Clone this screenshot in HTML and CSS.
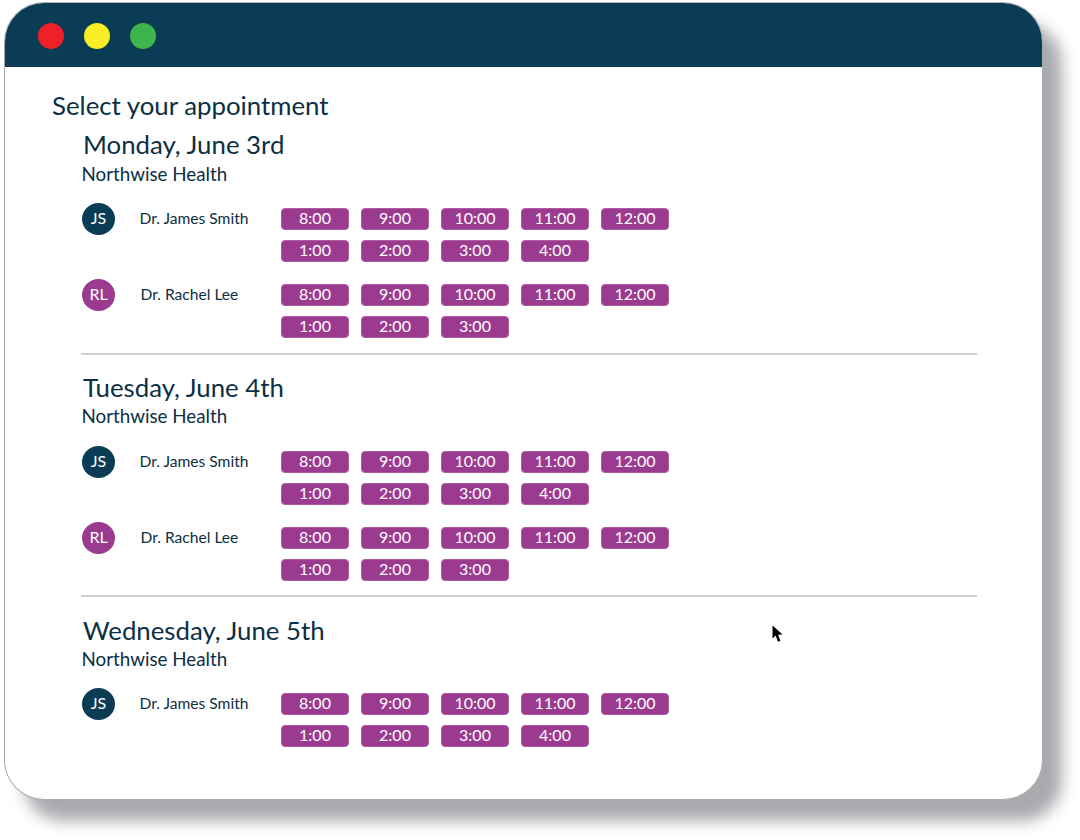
FILE: index.html
```html
<!DOCTYPE html>
<html lang="en">
<head>
  <meta charset="UTF-8">
  <title>Select your appointment</title>
  <link rel="stylesheet" href="styles.css">
</head>
<body>
  <div class="window">
    <div class="titlebar">
      <span class="dot dot-red"></span>
      <span class="dot dot-yellow"></span>
      <span class="dot dot-green"></span>
    </div>

    <div class="content">
      <h1 class="page-title">Select your appointment</h1>

      <section class="day">
        <h2 class="day-title">Monday, June 3rd</h2>
        <div class="clinic">Northwise Health</div>
        <div class="doctor">
          <span class="avatar avatar-navy">JS</span>
          <span class="doctor-name">Dr. James Smith</span>
          <div class="slots">
            <button class="slot">8:00</button><button class="slot">9:00</button><button class="slot">10:00</button><button class="slot">11:00</button><button class="slot">12:00</button>
            <button class="slot">1:00</button><button class="slot">2:00</button><button class="slot">3:00</button><button class="slot">4:00</button>
          </div>
        </div>
        <div class="doctor">
          <span class="avatar avatar-purple">RL</span>
          <span class="doctor-name doctor-name-alt">Dr. Rachel Lee</span>
          <div class="slots">
            <button class="slot">8:00</button><button class="slot">9:00</button><button class="slot">10:00</button><button class="slot">11:00</button><button class="slot">12:00</button>
            <button class="slot">1:00</button><button class="slot">2:00</button><button class="slot">3:00</button>
          </div>
        </div>
      </section>

      <section class="day">
        <h2 class="day-title">Tuesday, June 4th</h2>
        <div class="clinic">Northwise Health</div>
        <div class="doctor">
          <span class="avatar avatar-navy">JS</span>
          <span class="doctor-name">Dr. James Smith</span>
          <div class="slots">
            <button class="slot">8:00</button><button class="slot">9:00</button><button class="slot">10:00</button><button class="slot">11:00</button><button class="slot">12:00</button>
            <button class="slot">1:00</button><button class="slot">2:00</button><button class="slot">3:00</button><button class="slot">4:00</button>
          </div>
        </div>
        <div class="doctor">
          <span class="avatar avatar-purple">RL</span>
          <span class="doctor-name doctor-name-alt">Dr. Rachel Lee</span>
          <div class="slots">
            <button class="slot">8:00</button><button class="slot">9:00</button><button class="slot">10:00</button><button class="slot">11:00</button><button class="slot">12:00</button>
            <button class="slot">1:00</button><button class="slot">2:00</button><button class="slot">3:00</button>
          </div>
        </div>
      </section>

      <section class="day">
        <h2 class="day-title">Wednesday, June 5th</h2>
        <div class="clinic">Northwise Health</div>
        <div class="doctor">
          <span class="avatar avatar-navy">JS</span>
          <span class="doctor-name">Dr. James Smith</span>
          <div class="slots">
            <button class="slot">8:00</button><button class="slot">9:00</button><button class="slot">10:00</button><button class="slot">11:00</button><button class="slot">12:00</button>
            <button class="slot">1:00</button><button class="slot">2:00</button><button class="slot">3:00</button><button class="slot">4:00</button>
          </div>
        </div>
      </section>
    </div>

    <!-- mouse pointer sitting over the page -->
    <svg class="cursor" width="12" height="18" viewBox="0 0 12 18">
      <path d="M0.5 0.5 L0.5 13.5 L3.6 10.6 L6 16.8 L8.4 15.8 L6 9.8 L10.6 9.6 Z" fill="#000"/>
    </svg>
  </div>
</body>
</html>
```

FILE: styles.css
```css
html, body {
  height: 840px;
  overflow: hidden;
}

body {
  margin: 0;
  background: #fff;
  font-family: Lato, "Open Sans", sans-serif;
  color: #0c2f45;
}

.window {
  position: relative;
  box-sizing: border-box;
  width: 1039px;
  height: 798px;
  margin: 2px 0 0 4px;
  background: #fff;
  border: 1px solid #a9aaad;
  border-top-color: #b5b6b8;
  border-radius: 40px;
  box-shadow: 19px 21px 15px 0 #a9aaae;
}

.titlebar {
  display: flex;
  align-items: center;
  gap: 20px;
  box-sizing: border-box;
  height: 64px;
  padding: 2px 0 0 33px;
  background: #0a3d55;
  border-radius: 39px 39px 0 0;
}

.dot {
  width: 26px;
  height: 26px;
  border-radius: 50%;
}
.dot-red { background: #ee2028; }
.dot-yellow { background: #f8ee23; }
.dot-green { background: #3db54a; }

.content {
  padding: 23px 65px 0 47px;
}

.page-title {
  margin: 0;
  font-size: 25.8px;
  font-weight: 400;
  line-height: 30px;
}

.day {
  margin-left: 29px;
  height: 242px;
  box-sizing: border-box;
  border-bottom: 2px solid #cfcfcf;
}
.day + .day {
  padding-top: 17px;
}
.day:first-of-type {
  height: 235px;
  padding-top: 9px;
}
.day:last-child {
  padding-top: 18px;
  border-bottom: 0;
}

.day-title {
  margin: 0 0 0 2px;
  font-size: 25.8px;
  font-weight: 400;
  line-height: 30px;
}

.clinic {
  margin: 2px 0 0 0.5px;
  font-size: 18.8px;
  line-height: 24px;
}
.day:first-of-type .clinic {
  margin-top: 3px;
}

.doctor {
  display: flex;
  align-items: flex-start;
  margin: 14px 0 0 1px;
  height: 62px;
}
.clinic + .doctor {
  margin-top: 18px;
}
.day:first-of-type .clinic + .doctor,
.day:last-child .clinic + .doctor {
  margin-top: 17px;
}

.avatar {
  flex: none;
  display: flex;
  align-items: center;
  justify-content: center;
  box-sizing: border-box;
  width: 33px;
  height: 32px;
  padding-bottom: 4px;
  border-radius: 50%;
  color: #fff;
  font-size: 16px;
}
.avatar-navy { background: #0a3d55; }
.avatar-purple { background: #9b3b8f; }

.doctor-name {
  flex: none;
  width: 141px;
  padding-left: 24.5px;
  box-sizing: border-box;
  font-size: 15.6px;
  line-height: 30px;
}
.doctor-name-alt {
  padding-left: 25.5px;
}
.doctor-name + .slots {
  margin-left: 25px;
}

.slots {
  display: grid;
  grid-template-columns: repeat(5, 68px);
  column-gap: 12px;
  row-gap: 10px;
  margin-top: 5px;
}

.slot {
  height: 22px;
  padding: 0 0 2px;
  background: #9b3b8f;
  border: 1px solid #ad5ca3;
  border-radius: 4px;
  color: #fff;
  font-family: inherit;
  font-size: 16px;
  line-height: 18px;
}

.cursor {
  position: absolute;
  left: 767px;
  top: 622px;
}
```
